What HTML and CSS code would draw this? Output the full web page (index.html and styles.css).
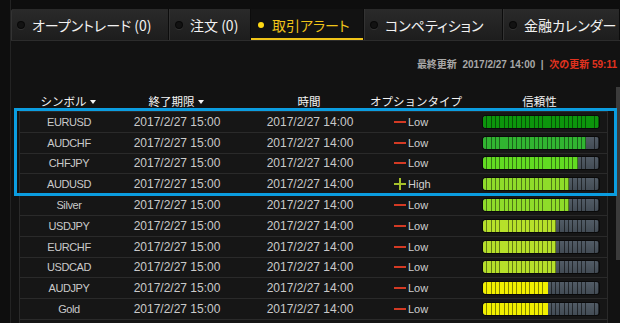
FILE: index.html
```html
<!DOCTYPE html>
<html lang="ja">
<head>
    <meta charset="utf-8">
    <title>取引アラート</title>
    <link rel="stylesheet" href="styles.css">
</head>
<body>
    <div class="app">
        <nav class="tabs">
            <div class="tab tab_open"><span class="dot"></span>オープントレード (0)</div>
            <div class="tab tab_orders"><span class="dot"></span>注文 (0)</div>
            <div class="tab tab_alerts active"><span class="dot"></span>取引アラート</div>
            <div class="tab tab_comp"><span class="dot"></span>コンペティション</div>
            <div class="tab tab_cal"><span class="dot"></span>金融カレンダー</div>
        </nav>
        <div class="panel">
            <div class="update">最終更新&nbsp; 2017/2/27 14:00 &nbsp;|&nbsp; <span class="next">次の更新 59:11</span></div>

            <div class="alerts">
                <div class="cols thead">
                    <div class="th sort">シンボル</div>
                    <div class="th sort">終了期限</div>
                    <div class="th">時間</div>
                    <div class="th">オプションタイプ</div>
                    <div class="th th_meter">信頼性</div>
                </div>
                <div class="tbody">
                    <div class="highlight"></div>

                    <div class="cols row">
                        <div class="sym">EURUSD</div><div>2017/2/27 15:00</div><div>2017/2/27 14:00</div>
                        <div class="opt"><span class="minus"></span>Low</div>
                        <div class="meter_cell"><div class="meter"><div class="fill lv1" style="width:116px"></div></div></div>
                    </div>
                    <div class="cols row">
                        <div class="sym">AUDCHF</div><div>2017/2/27 15:00</div><div>2017/2/27 14:00</div>
                        <div class="opt"><span class="minus"></span>Low</div>
                        <div class="meter_cell"><div class="meter"><div class="fill lv2" style="width:103.2px"></div></div></div>
                    </div>
                    <div class="cols row">
                        <div class="sym">CHFJPY</div><div>2017/2/27 15:00</div><div>2017/2/27 14:00</div>
                        <div class="opt"><span class="minus"></span>Low</div>
                        <div class="meter_cell"><div class="meter"><div class="fill lv3" style="width:94.6px"></div></div></div>
                    </div>
                    <div class="cols row">
                        <div class="sym">AUDUSD</div><div>2017/2/27 15:00</div><div>2017/2/27 14:00</div>
                        <div class="opt"><svg class="plus" width="12" height="12" viewBox="0 0 12 12"><path d="M6 0v12M0 6h12" stroke="#a6c22a" stroke-width="2"/></svg>High</div>
                        <div class="meter_cell"><div class="meter"><div class="fill lv4" style="width:86px"></div></div></div>
                    </div>
                    <div class="cols row">
                        <div class="sym">Silver</div><div>2017/2/27 15:00</div><div>2017/2/27 14:00</div>
                        <div class="opt"><span class="minus"></span>Low</div>
                        <div class="meter_cell"><div class="meter"><div class="fill lv4" style="width:86px"></div></div></div>
                    </div>
                    <div class="cols row">
                        <div class="sym">USDJPY</div><div>2017/2/27 15:00</div><div>2017/2/27 14:00</div>
                        <div class="opt"><span class="minus"></span>Low</div>
                        <div class="meter_cell"><div class="meter"><div class="fill lv5" style="width:73.1px"></div></div></div>
                    </div>
                    <div class="cols row">
                        <div class="sym">EURCHF</div><div>2017/2/27 15:00</div><div>2017/2/27 14:00</div>
                        <div class="opt"><span class="minus"></span>Low</div>
                        <div class="meter_cell"><div class="meter"><div class="fill lv5" style="width:73.1px"></div></div></div>
                    </div>
                    <div class="cols row">
                        <div class="sym">USDCAD</div><div>2017/2/27 15:00</div><div>2017/2/27 14:00</div>
                        <div class="opt"><span class="minus"></span>Low</div>
                        <div class="meter_cell"><div class="meter"><div class="fill lv5" style="width:73.1px"></div></div></div>
                    </div>
                    <div class="cols row">
                        <div class="sym">AUDJPY</div><div>2017/2/27 15:00</div><div>2017/2/27 14:00</div>
                        <div class="opt"><span class="minus"></span>Low</div>
                        <div class="meter_cell"><div class="meter"><div class="fill lv6" style="width:64.5px"></div></div></div>
                    </div>
                    <div class="cols row">
                        <div class="sym">Gold</div><div>2017/2/27 15:00</div><div>2017/2/27 14:00</div>
                        <div class="opt"><span class="minus"></span>Low</div>
                        <div class="meter_cell"><div class="meter"><div class="fill lv6" style="width:64.5px"></div></div></div>
                    </div>
                    <div class="row row_more"></div>
                </div>
            </div>

            <div class="scroll_thumb"></div>
        </div>
    </div>
</body>
</html>
```

FILE: styles.css
```css
html, body {
    margin: 0;
    height: 100%;
    overflow: hidden;
}
body {
    background: #0e0e0e;
    font-family: "Liberation Sans", "Noto Sans CJK JP", sans-serif;
    color: #c8c8c8;
}
.app {
    margin-left: 10px;
    height: 100%;
    border-left: 1px solid #232323;
    display: flex;
    flex-direction: column;
}

/* tabs */
.tabs {
    flex: none;
    display: flex;
    margin-top: 9px;
    height: 31px;
    border-bottom: 1px solid #2c2c2c;
    font-family: "Noto Sans CJK JP", sans-serif;
    font-size: 14px;
    font-feature-settings: "palt";
    white-space: nowrap;
}
.tab {
    flex: none;
    display: flex;
    align-items: center;
    box-sizing: border-box;
    padding: 0 0 0 7px;
    color: #f2f2f2;
    background: linear-gradient(#2a2a2a, #1d1d1d);
    border-right: 1px solid #0c0c0c;
    box-shadow: inset 1px 0 #333;
}
.tab:first-child {
    border-top-left-radius: 3px;
}
.tab_open { width: 158px; }
.tab_orders { width: 82px; }
.tab_alerts { width: 113px; }
.tab_comp { width: 139px; }
.tab_cal { flex: 1; }
.dot {
    width: 6px;
    height: 6px;
    border-radius: 50%;
    background: #121212;
    box-shadow: 0 0 0 1px #080808, 0 1px 0 1px #333;
    margin-right: 8px;
    flex: none;
}
.tab.active {
    background: #121212;
    color: #f0c419;
    box-shadow: inset 0 -2px #f0c419;
}
.tab.active .dot {
    background: #ffd914;
    box-shadow: none;
}

/* panel */
.panel {
    position: relative;
    flex: 1;
    min-height: 0;
    background: #121212;
}
.update {
    padding: 17px 3px 0 0;
    line-height: 14px;
    font-size: 10px;
    font-weight: bold;
    color: #a8a8a8;
    text-align: right;
    white-space: nowrap;
}
.update .next {
    color: #e2321f;
}
.scroll_thumb {
    position: absolute;
    top: 46px;
    right: 0;
    width: 4px;
    height: 173px;
    background: #3b3b3b;
}

/* table */
.alerts {
    margin: 21px 12px 0 8px;
}
.cols {
    display: grid;
    grid-template-columns: 98px 118px 148px 66px 1fr;
}
.cols > div {
    display: flex;
    justify-content: center;
    align-items: center;
    white-space: nowrap;
}
.thead {
    height: 18px;
    line-height: 16px;
    align-items: start;
    font-family: "Noto Sans CJK JP", sans-serif;
    font-size: 11.5px;
    color: #f4f4f4;
}
.thead > div {
    align-items: flex-start;
}
.th.sort::after {
    content: "";
    border-left: 3.5px solid transparent;
    border-right: 3.5px solid transparent;
    border-top: 4px solid #f4f4f4;
    margin: 7px 0 0 3px;
}
.th_meter {
    padding-left: 22px;
}
.tbody {
    position: relative;
    border-top: 1px solid #2a2a2a;
}
.row {
    box-sizing: border-box;
    height: 20.8px;
    background: #161616;
    border: 1px solid #2a2a2a;
    border-top: none;
    font-size: 12px;
    color: #cacaca;
}
.sym {
    font-size: 11px;
    letter-spacing: -0.4px;
}
.cols > .opt {
    justify-content: flex-start;
    padding-left: 10px;
    font-size: 11px;
    color: #d0d0d0;
    gap: 2px;
}
.minus {
    width: 12px;
    height: 2px;
    background: #d33a24;
}
.plus {
    flex: none;
}
.cols > .meter_cell {
    justify-content: flex-start;
    padding-left: 33px;
}
.meter {
    width: 116px;
    height: 12px;
    border-radius: 3px;
    overflow: hidden;
    box-shadow: 0 0 0 1px #0a0a0a;
    background:
        repeating-linear-gradient(90deg, transparent 0 3.3px, rgba(0, 0, 0, .55) 3.3px 4.3px),
        linear-gradient(#525c66, #434c55);
}
.fill {
    height: 100%;
    background:
        repeating-linear-gradient(90deg, transparent 0 3.3px, rgba(0, 0, 0, .45) 3.3px 4.3px),
        var(--c);
}
.lv1 { --c: #0c960c; }
.lv2 { --c: #31b531; }
.lv3 { --c: #62dc22; }
.lv4 { --c: #8fdc2a; }
.lv5 { --c: #b6e02a; }
.lv6 { --c: #f2f000; }

.highlight {
    position: absolute;
    left: -5px;
    top: -4px;
    width: 603px;
    height: 88px;
    box-sizing: border-box;
    border: 3px solid #0b9de0;
    z-index: 1;
}
```
